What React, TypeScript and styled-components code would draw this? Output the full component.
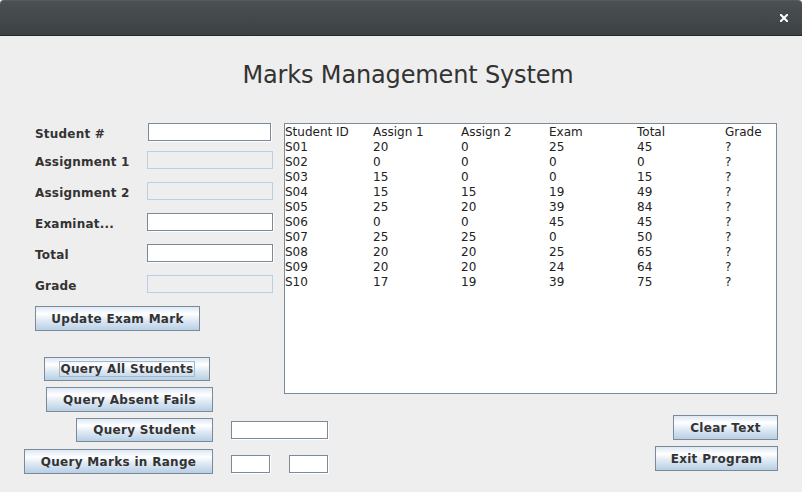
import React from 'react';
import styled, { createGlobalStyle } from 'styled-components';

const Global = createGlobalStyle`
  html, body { margin: 0; padding: 0; background: #eeeeee; }
  body { width: 802px; height: 492px; overflow: hidden; font-family: "DejaVu Sans", "Liberation Sans", sans-serif; }
  * { box-sizing: border-box; }
`;

const Window = styled.div`
  width: 802px;
  height: 492px;
  display: flex;
  flex-direction: column;
  background: #eeeeee;
`;

const TitleBar = styled.header`
  flex: none;
  height: 36px;
  background: linear-gradient(#4b5152, #3c4143);
  border-top: 1px solid #565c5d;
  border-bottom: 1px solid #25292a;
  border-radius: 4px 4px 0 0;
  display: flex;
  align-items: center;
  justify-content: flex-end;
  padding-right: 14px;
`;

const CloseIcon = styled.svg`
  width: 8px;
  height: 8px;
  display: block;
`;

const Content = styled.main`
  flex: 1;
  display: flex;
  flex-direction: column;
  padding: 0 24px;
`;

const Heading = styled.h1`
  margin: 25px 0 0;
  padding-left: 14px;
  text-align: center;
  font: 400 24px/28px "DejaVu Sans", sans-serif;
  letter-spacing: -0.15px;
  color: #333333;
`;

const TopArea = styled.section`
  margin-top: 34px;
  display: flex;
  align-items: flex-start;
`;

const LeftCol = styled.div`
  width: 260px;
  display: flex;
  flex-direction: column;
  align-items: flex-start;
`;

const FormRow = styled.div<{ $mt: number }>`
  margin-top: ${p => p.$mt}px;
  padding-left: 11px;
  height: 18px;
  display: grid;
  grid-template-columns: 112px auto;
  align-items: center;
`;

const Label = styled.label`
  font: 700 12px/14px "DejaVu Sans", sans-serif;
  letter-spacing: 0.2px;
  color: #333333;
  padding-top: 3px;
  white-space: nowrap;
`;

const Field = styled.div<{ $w: number; $ml?: number; $disabled?: boolean }>`
  width: ${p => p.$w}px;
  height: 18px;
  margin-left: ${p => p.$ml ?? 0}px;
  background: ${p => (p.$disabled ? '#eeeeee' : '#ffffff')};
  border: 1px solid ${p => (p.$disabled ? '#b8cfe5' : '#7a8a99')};
  box-shadow: ${p => (p.$disabled ? 'none' : '1px 1px 0 #ffffff')};
`;

const Button = styled.button<{ $w: number; $h?: number; $mt?: number; $ml?: number }>`
  width: ${p => p.$w}px;
  height: ${p => p.$h ?? 25}px;
  margin: ${p => p.$mt ?? 0}px 0 0 ${p => p.$ml ?? 0}px;
  padding: 0;
  border: 1px solid #7a8a99;
  border-radius: 0;
  background: linear-gradient(#dde8f3 0%, #ffffff 30%, #dde8f3 60%, #b8cfe5 100%);
  font: 700 12px/14px "DejaVu Sans", sans-serif;
  letter-spacing: 0.3px;
  color: #333333;
  display: flex;
  align-items: center;
  justify-content: center;
  flex: none;
`;

const FocusText = styled.span`
  border: 1px solid #a3b8cc;
  padding: 1px 1px 0;
  line-height: 13px;
`;

const TextArea = styled.div`
  width: 493px;
  height: 271px;
  padding-top: 1px;
  background: #ffffff;
  border: 1px solid #7a8a99;
  display: grid;
  grid-template-columns: repeat(6, 88px);
  grid-auto-rows: 15px;
  align-content: start;
  font: 400 12px/15px "DejaVu Sans", sans-serif;
  color: #222222;
`;

const Cell = styled.span`
  white-space: pre;
`;

const BottomArea = styled.section`
  display: flex;
  justify-content: space-between;
  align-items: flex-start;
`;

const QueryGrid = styled.div`
  display: grid;
  grid-template-columns: 189px 97px;
  column-gap: 18px;
  align-items: start;
`;

const QueryButtonCell = styled.div<{ $mt: number }>`
  margin-top: ${p => p.$mt}px;
  display: flex;
  justify-content: flex-end;
`;

const QueryFieldCell = styled.div<{ $mt: number }>`
  margin-top: ${p => p.$mt}px;
  display: flex;
  justify-content: space-between;
`;

const RightButtons = styled.div`
  display: flex;
  flex-direction: column;
  align-items: flex-end;
`;

const rows: string[][] = [
  ['Student ID', 'Assign 1', 'Assign 2', 'Exam', 'Total', 'Grade'],
  ['S01', '20', '0', '25', '45', '?'],
  ['S02', '0', '0', '0', '0', '?'],
  ['S03', '15', '0', '0', '15', '?'],
  ['S04', '15', '15', '19', '49', '?'],
  ['S05', '25', '20', '39', '84', '?'],
  ['S06', '0', '0', '45', '45', '?'],
  ['S07', '25', '25', '0', '50', '?'],
  ['S08', '20', '20', '25', '65', '?'],
  ['S09', '20', '20', '24', '64', '?'],
  ['S10', '17', '19', '39', '75', '?'],
];

const formRows = [
  { label: 'Student #', mt: 0, w: 123, ml: 1, disabled: false },
  { label: 'Assignment 1', mt: 10, w: 126, ml: 0, disabled: true },
  { label: 'Assignment 2', mt: 13, w: 126, ml: 0, disabled: true },
  { label: 'Examinat...', mt: 13, w: 126, ml: 0, disabled: false },
  { label: 'Total', mt: 13, w: 126, ml: 0, disabled: false },
  { label: 'Grade', mt: 13, w: 126, ml: 0, disabled: true },
];

export default function App() {
  return (
    <>
      <Global />
      <Window>
        <TitleBar>
          <CloseIcon viewBox="0 0 8 8">
            <path d="M0.8 0.8 L7.2 7.2 M7.2 0.8 L0.8 7.2" stroke="#ffffff" strokeWidth="2" strokeLinecap="square" />
          </CloseIcon>
        </TitleBar>
        <Content>
          <Heading>Marks Management System</Heading>
          <TopArea>
            <LeftCol>
              {formRows.map(r => (
                <FormRow key={r.label} $mt={r.mt}>
                  <Label>{r.label}</Label>
                  <Field $w={r.w} $ml={r.ml} $disabled={r.disabled} />
                </FormRow>
              ))}
              <Button $w={165} $mt={13} $ml={11}>Update Exam Mark</Button>
              <Button $w={166} $h={24} $mt={26} $ml={20}>
                <FocusText>Query All Students</FocusText>
              </Button>
              <Button $w={167} $mt={6} $ml={22}>Query Absent Fails</Button>
            </LeftCol>
            <TextArea>
              {rows.map((r, i) =>
                r.map((c, j) => <Cell key={`${i}-${j}`}>{c}</Cell>)
              )}
            </TextArea>
          </TopArea>
          <BottomArea>
            <QueryGrid>
              <QueryButtonCell $mt={6}>
                <Button $w={137} $h={24}>Query Student</Button>
              </QueryButtonCell>
              <QueryFieldCell $mt={9}>
                <Field $w={97} />
              </QueryFieldCell>
              <QueryButtonCell $mt={7}>
                <Button $w={189}>Query Marks in Range</Button>
              </QueryButtonCell>
              <QueryFieldCell $mt={13}>
                <Field $w={39} />
                <Field $w={39} />
              </QueryFieldCell>
            </QueryGrid>
            <RightButtons>
              <Button $w={105} $mt={3}>Clear Text</Button>
              <Button $w={123} $mt={6}>Exit Program</Button>
            </RightButtons>
          </BottomArea>
        </Content>
      </Window>
    </>
  );
}
